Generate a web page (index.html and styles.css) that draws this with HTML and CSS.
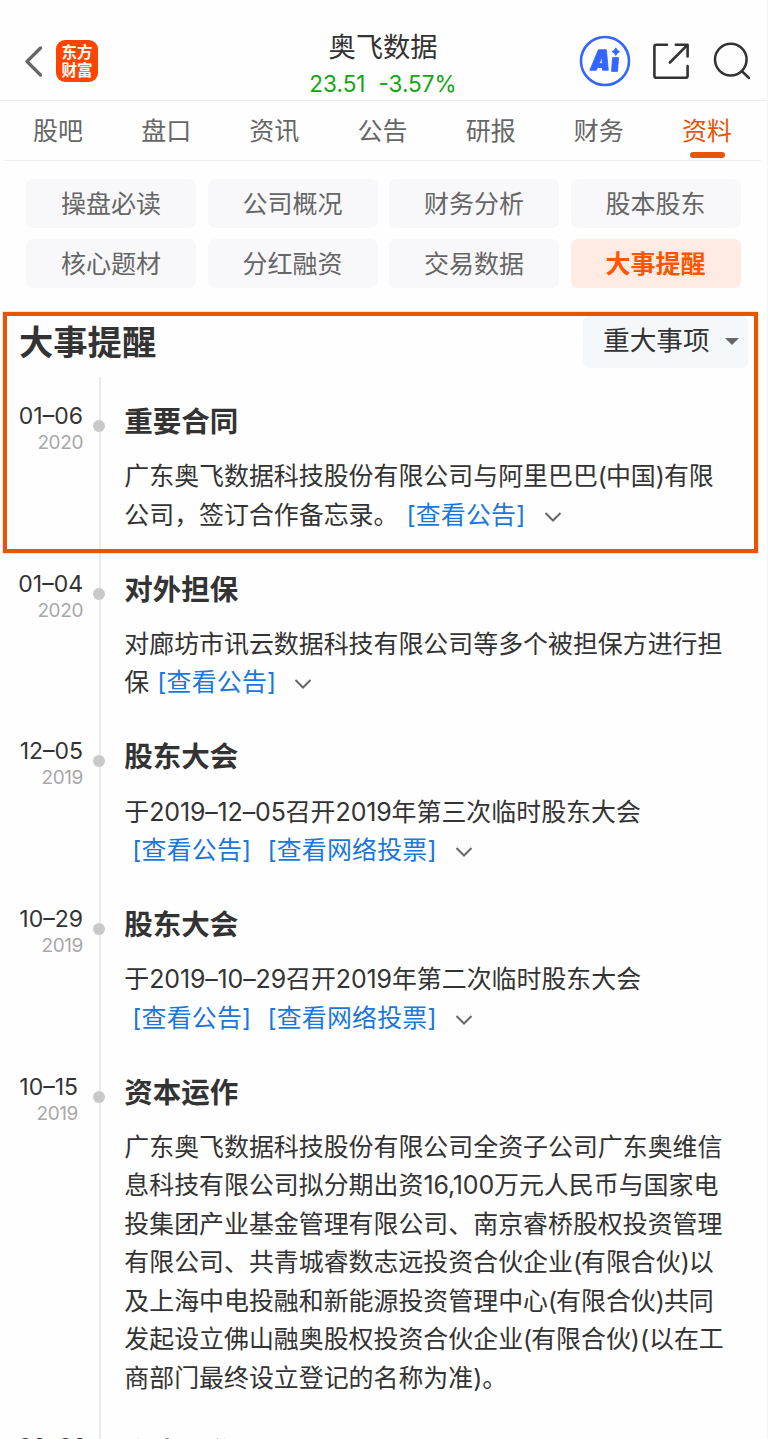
FILE: index.html
```html
<!DOCTYPE html>
<html lang="zh-CN">
<head>
<meta charset="utf-8">
<title>奥飞数据</title>
<link rel="stylesheet" href="styles.css">
</head>
<body>
<div class="page">
  <header class="topbar">
    <div class="side">
      <svg class="back" width="20" height="32" viewBox="0 0 20 32"><path d="M16.500 3 3 16.500 16.500 30" fill="none" stroke="#666" stroke-width="3.200" stroke-linecap="round" stroke-linejoin="round"/></svg>
      <div class="logo"><span>东方</span><span>财富</span></div>
    </div>
    <div class="stock">
      <div class="name">奥飞数据</div>
      <div class="quote"><span class="price">23.51</span><span class="change">-3.57%</span></div>
    </div>
    <div class="side actions">
      <svg width="52" height="52" viewBox="0 0 52 52">
        <circle cx="26" cy="26" r="24" fill="none" stroke="#3366ff" stroke-width="2.600"/>
        <path d="M19.400 14.700h8l1.900 20.600h-5.700l-.2-2.800h-4.700l-1.400 2.800h-6.500zM22.900 22l-2.600 6.600h3z" fill="#3366ff" stroke="#3366ff" stroke-width=".8" stroke-linejoin="round" fill-rule="evenodd"/>
        <path d="M33.600 22.400h6l-1.100 14h-6z" fill="#3366ff" stroke="#3366ff" stroke-width=".8" stroke-linejoin="round"/>
        <path d="M36.800 12.800q1 2.900 3.800 3.900-2.800 1-3.800 3.900-1-2.900-3.800-3.900 2.800-1 3.800-3.900z" fill="#3366ff" stroke="#3366ff" stroke-width=".8"/>
      </svg>
      <svg width="38" height="38" viewBox="0 0 38 38" fill="none" stroke="#333" stroke-width="2.600" stroke-linecap="round" stroke-linejoin="round"><path d="M15 2.700H4.500Q2.400 2.700 2.400 4.800V33.700Q2.400 35.800 4.500 35.800H33.500Q35.600 35.800 35.600 33.700V24M23.800 2.700H35.600V14.500M35.200 3.100 17.900 20.500"/></svg>
      <svg width="38" height="38" viewBox="0 0 38 38" fill="none" stroke="#333" stroke-width="2.500" stroke-linecap="round"><circle cx="17.800" cy="17.600" r="15.800"/><path d="M28.700 29 36 36"/></svg>
    </div>
  </header>

  <nav class="tabs">
    <a>股吧</a><a>盘口</a><a>资讯</a><a>公告</a><a>研报</a><a>财务</a><a class="active">资料</a>
  </nav>

  <div class="chips">
    <a>操盘必读</a><a>公司概况</a><a>财务分析</a><a>股本股东</a>
    <a>核心题材</a><a>分红融资</a><a>交易数据</a><a class="active">大事提醒</a>
  </div>

  <div class="section-head">
    <h1>大事提醒</h1>
    <div class="select"><span>重大事项</span><i></i></div>
  </div>

  <main class="timeline">
    <section class="event">
      <div class="when"><div class="date">01–06</div><div class="year">2020</div></div>
      <div class="rail"><i class="dot"></i></div>
      <div class="what"><h2>重要合同</h2>
        <p>广东奥飞数据科技股份有限公司与阿里巴巴<span class="paren">(</span>中国<span class="paren">)</span>有限</p>
        <p>公司，签订合作备忘录。<a class="link l1">[查看公告]</a><svg class="chev" viewBox="0 0 18 12"><path d="M1.500 2 9 9.500 16.500 2"/></svg></p>
      </div>
    </section>
    <section class="event">
      <div class="when"><div class="date">01–04</div><div class="year">2020</div></div>
      <div class="rail"><i class="dot"></i></div>
      <div class="what"><h2>对外担保</h2>
        <p>对廊坊市讯云数据科技有限公司等多个被担保方进行担</p>
        <p>保<a class="link l2">[查看公告]</a><svg class="chev" viewBox="0 0 18 12"><path d="M1.500 2 9 9.500 16.500 2"/></svg></p>
      </div>
    </section>
    <section class="event">
      <div class="when"><div class="date">12–05</div><div class="year">2019</div></div>
      <div class="rail"><i class="dot"></i></div>
      <div class="what"><h2>股东大会</h2>
        <p>于<span class="num">2019–12–05</span>召开<span class="num">2019</span>年第三次临时股东大会</p>
        <p><a class="link l3">[查看公告]</a><a class="link l4">[查看网络投票]</a><svg class="chev" viewBox="0 0 18 12"><path d="M1.500 2 9 9.500 16.500 2"/></svg></p>
      </div>
    </section>
    <section class="event">
      <div class="when"><div class="date">10–29</div><div class="year">2019</div></div>
      <div class="rail"><i class="dot"></i></div>
      <div class="what"><h2>股东大会</h2>
        <p>于<span class="num">2019–10–29</span>召开<span class="num">2019</span>年第二次临时股东大会</p>
        <p><a class="link l3">[查看公告]</a><a class="link l4">[查看网络投票]</a><svg class="chev" viewBox="0 0 18 12"><path d="M1.500 2 9 9.500 16.500 2"/></svg></p>
      </div>
    </section>
    <section class="event">
      <div class="when narrow"><div class="date">10–15</div><div class="year">2019</div></div>
      <div class="rail"><i class="dot"></i></div>
      <div class="what"><h2>资本运作</h2>
        <p>广东奥飞数据科技股份有限公司全资子公司广东奥维信</p>
        <p>息科技有限公司拟分期出资<span class="num">16,100</span>万元人民币与国家电</p>
        <p>投集团产业基金管理有限公司、南京睿桥股权投资管理</p>
        <p>有限公司、共青城睿数志远投资合伙企业<span class="paren">(</span>有限合伙<span class="paren">)</span>以</p>
        <p>及上海中电投融和新能源投资管理中心<span class="paren">(</span>有限合伙<span class="paren">)</span>共同</p>
        <p>发起设立佛山融奥股权投资合伙企业<span class="paren">(</span>有限合伙)(以在工</p>
        <p>商部门最终设立登记的名称为准)。</p>
      </div>
    </section>
    <section class="event">
      <div class="when wide"><div class="date">09–09</div><div class="year">2019</div></div>
      <div class="rail"><i class="dot"></i></div>
      <div class="what"><h2>资本运作</h2></div>
    </section>
  </main>
  <div class="highlight"></div>
</div>
</body>
</html>
```
FILE: styles.css
```css
* { box-sizing: border-box; }
html, body { margin: 0; height: 1439px; overflow: hidden; }
body {
  background: #fefefe;
  color: #333;
  font-family: Inter, "Noto Sans CJK SC", sans-serif;
}
h1, h2, p { margin: 0; }
svg { display: block; flex: none; }
.page {
  position: relative;
  width: 768px;
  height: 1439px;
  overflow: hidden;
  border-right: 1px solid #f6f6f6;
}

.topbar {
  display: grid;
  grid-template-columns: 1fr auto 1fr;
  height: 101px;
  padding: 22px 16px 0 24px;
  border-bottom: 1px solid #e9e9e9;
}
.side { display: flex; align-items: center; }
.back { margin-right: 12px; }
.logo {
  width: 42px;
  height: 42px;
  padding-bottom: 1px;
  border-radius: 9px;
  background: #ff4400;
  color: #fff;
  font: 700 15.500px/17.500px "Noto Sans CJK SC", sans-serif;
  display: flex;
  flex-direction: column;
  align-items: center;
  justify-content: center;
}
.stock { margin-left: -9px; text-align: center; white-space: nowrap; }
.name { font-size: 27.300px; line-height: 40px; margin-top: 6px; }
.quote {
  display: flex;
  justify-content: center;
  gap: 13px;
  color: #12a512;
  font-size: 22.500px;
  line-height: 31px;
}
.actions { justify-content: flex-end; }
.actions svg:nth-child(2) { margin: 0 23px 0 21px; }

.tabs {
  display: flex;
  height: 60px;
  margin: 0 6px 0 4px;
  border-bottom: 1px solid #efefef;
  color: #666;
}
.tabs a {
  position: relative;
  flex: 1;
  text-align: center;
  font-size: 25px;
  line-height: 61px;
}
.tabs .active { color: #e95504; }
.tabs .active::after {
  content: "";
  position: absolute;
  left: 50%;
  bottom: 2.500px;
  width: 35px;
  height: 5.500px;
  margin-left: -17px;
  border-radius: 3px;
  background: #e95504;
}

.chips {
  display: grid;
  grid-template-columns: repeat(4, 1fr);
  gap: 11.500px;
  padding: 17.500px 26.500px 0 26px;
}
.chips a {
  height: 49px;
  border-radius: 7px;
  background: #f8f8fa;
  color: #666;
  font-size: 25px;
  line-height: 50px;
  text-align: center;
}
.chips .active { background: #ffebe3; color: #ff5500; font-weight: 700; }

.section-head {
  display: flex;
  justify-content: space-between;
  height: 89px;
  padding: 28px 19px 0 19px;
}
.section-head h1 { font-size: 34.300px; line-height: 53px; font-weight: 700; }
.select {
  display: flex;
  align-items: center;
  justify-content: space-between;
  width: 165px;
  height: 52px;
  padding: 0 9px 0 20px;
  border-radius: 6px;
  background: #f5f8fa;
  font-size: 26.700px;
}
.select span { line-height: 40px; margin-top: -5px; }
.select i {
  margin-top: -2px;
  border: 7px solid transparent;
  border-top-color: #666;
  border-bottom: 0;
}

.timeline { display: flex; flex-direction: column; }
.event {
  display: grid;
  grid-template-columns: 83px 31px 1fr;
}
.when { padding: 23px 0 0; text-align: right; white-space: nowrap; }
.when.narrow { padding-right: 5px; }
.when.wide { margin-right: -4px; }
.date { font-size: 23px; line-height: 32px; }
.year { font-size: 19px; line-height: 21px; color: #a8a8a8; letter-spacing: -.4px; }
.rail {
  display: flex;
  justify-content: center;
  padding-top: 43px;
  background: linear-gradient(#ebebeb, #ebebeb) 16px 0 / 2px 100% no-repeat;
}
.dot { width: 12px; height: 12px; border-radius: 50%; background: #c9c9c9; }
.what { padding: 24px 0 10.500px 10.300px; }
.what h2 {
  margin-bottom: 14.200px;
  font-size: 28.500px;
  line-height: 42px;
  font-weight: 700;
}
.what p {
  height: 38.500px;
  font-size: 24.930px;
  line-height: 38.500px;
  white-space: nowrap;
}
.num { letter-spacing: -.12px; }
.paren { letter-spacing: -1px; }
.link { color: #1a77dc; letter-spacing: .2px; }
.l1, .l2, .l3 { margin-left: 8px; }
.l4 { margin-left: 16px; }
.chev {
  display: inline-block;
  width: 18px;
  height: 12px;
  margin-left: 18px;
  vertical-align: 1px;
  fill: none;
  stroke: #666;
  stroke-width: 2;
}

/* Frame around the newest event */
.highlight {
  position: absolute;
  left: 3px;
  top: 312px;
  width: 755px;
  height: 241px;
  border: 4px solid #e65500;
  box-shadow: 0 0 0 1px rgba(230, 85, 0, .15);
}
```
